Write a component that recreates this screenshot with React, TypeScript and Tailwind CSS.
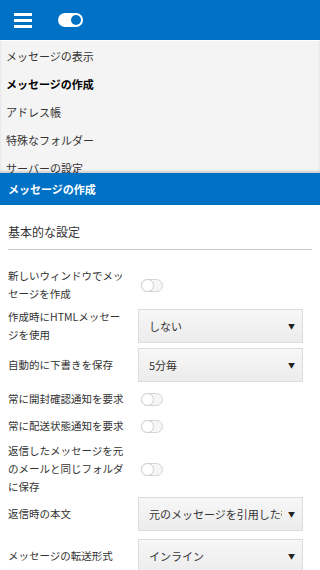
import React from "react";

const font = { fontFamily: '"Noto Sans CJK JP", "Noto Sans", sans-serif' };

function Toggle() {
  return (
    <div className="ml-[3px] flex h-[13px] w-[22px] items-center rounded-full border border-[#d4d4d4] bg-[#f6f6f6]">
      <div className="-ml-px h-[13px] w-[13px] rounded-full border border-[#cfcfcf] bg-white" />
    </div>
  );
}

function Select({ value }: { value: string }) {
  return (
    <div className="flex h-[34px] w-[165px] items-center border border-[#dcdcdc] bg-gradient-to-b from-[#f7f7f7] to-[#ececec] pl-[10px] pr-[7px] text-[11px] text-[#333]">
      <span className="min-w-0 flex-1 overflow-hidden whitespace-nowrap">{value}</span>
      <span className="ml-[6px] shrink-0 text-[7px] text-[#222]">▼</span>
    </div>
  );
}

function Row({ label, children, className = "" }: { label: React.ReactNode; children: React.ReactNode; className?: string }) {
  return (
    <div className={"flex items-center " + className}>
      <div className="w-[130px] shrink-0 pr-[10px] text-[10.5px] leading-[18px] text-[#333]">{label}</div>
      {children}
    </div>
  );
}

const menu = ["メッセージの表示", "メッセージの作成", "アドレス帳", "特殊なフォルダー", "サーバーの設定"];

export default function App() {
  return (
    <div className="h-[570px] w-[320px] overflow-hidden bg-white" style={font}>
      <div className="flex h-[40px] items-center bg-[#0072c6] pl-[14px]">
        <div className="flex w-[18px] flex-col gap-[3px]">
          <div className="h-[3px] bg-white" />
          <div className="h-[3px] bg-white" />
          <div className="h-[3px] bg-white" />
        </div>
        <div className="ml-[26px] flex h-[14px] w-[25px] items-center justify-end rounded-full bg-white pr-[2px]">
          <div className="h-[10px] w-[10px] rounded-full bg-[#0072c6]" />
        </div>
      </div>
      <div className="h-[133px] overflow-hidden border-t border-white bg-[#f4f4f4] pt-px shadow-[inset_0_-2px_2px_rgba(0,0,0,0.15)]">
        {menu.map((m, i) => (
          <div key={m} className={"flex h-[28px] items-center px-[6px] text-[11px] text-[#333] " + (i === 1 ? "font-bold text-black" : "")}>
            {m}
          </div>
        ))}
      </div>
      <div className="flex h-[32px] items-center bg-[#0072c6] px-[8px] text-[11px] font-bold text-white">
        メッセージの作成
      </div>
      <div className="px-[8px]">
        <div className="border-b border-[#cccccc] pb-[8px] pt-[18px] text-[12px] leading-[18px] text-[#333]">基本的な設定</div>
        <Row label={<>新しいウィンドウでメッセージを作成</>} className="mt-[17px]">
          <Toggle />
        </Row>
        <Row label="作成時にHTMLメッセージを使用" className="mt-[5px]">
          <Select value="しない" />
        </Row>
        <Row label="自動的に下書きを保存" className="mt-[4px]">
          <Select value="5分毎" />
        </Row>
        <Row label="常に開封確認通知を要求" className="mt-[8px]">
          <Toggle />
        </Row>
        <Row label="常に配送状態通知を要求" className="mt-[9px]">
          <Toggle />
        </Row>
        <Row label="返信したメッセージを元のメールと同じフォルダに保存" className="mt-[7px]">
          <Toggle />
        </Row>
        <Row label="返信時の本文" className="mt-[1px]">
          <Select value="元のメッセージを引用した後に返信" />
        </Row>
        <Row label="メッセージの転送形式" className="mt-[8px]">
          <Select value="インライン" />
        </Row>
      </div>
    </div>
  );
}
